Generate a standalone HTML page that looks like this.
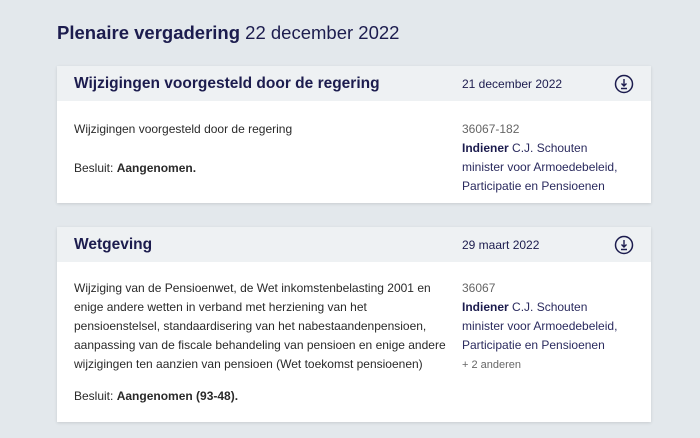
<!DOCTYPE html><html><head><meta charset="utf-8"><style>
body{margin:0;width:700px;height:438px;background:#e3e8ec;font-family:"Liberation Sans",sans-serif;overflow:hidden;position:relative}
h1{position:absolute;left:57px;top:22px;margin:0;font-size:18.5px;font-weight:normal;color:#1c1c4e}
h1 b{font-weight:bold}
.card{position:absolute;left:57px;width:594px;background:#fff;box-shadow:0 1px 3px rgba(0,0,0,.12)}
.hd{height:35px;background:#eef1f3;position:relative}
.hd .t{position:absolute;left:17px;top:9px;font-size:15.5px;font-weight:bold;color:#1c1c4e}
.hd .d{position:absolute;left:405px;top:11px;font-size:12px;color:#1c1c4e}
.hd svg{position:absolute;left:557px;top:8px}
.l{position:absolute;left:17px;font-size:12px;line-height:19px;color:#2a2a2a}
.r{position:absolute;left:405px;font-size:12px;line-height:19px;color:#2a2a5e}
.r b{color:#1c1c4e}
.g{color:#666}
</style></head><body>
<h1><b>Plenaire vergadering</b> 22 december 2022</h1>
<div class="card" style="top:66px;height:137px">
<div class="hd"><div class="t">Wijzigingen voorgesteld door de regering</div><div class="d">21 december 2022</div>
<svg width="20" height="20" viewBox="0 0 20 20"><circle cx="10" cy="10" r="8.5" fill="none" stroke="#1c1c4e" stroke-width="1.5"/><path d="M10 5v7M7.5 9.5 10 12l2.5-2.5M7 14.5h6" fill="none" stroke="#1c1c4e" stroke-width="1.4"/></svg></div>
<div class="l" style="top:54px">Wijzigingen voorgesteld door de regering</div>
<div class="l" style="top:93px">Besluit: <b>Aangenomen.</b></div>
<div class="r" style="top:54px"><span class="g">36067-182</span><br><b>Indiener</b> C.J. Schouten<br>minister voor Armoedebeleid,<br>Participatie en Pensioenen</div>
</div>
<div class="card" style="top:227px;height:195px">
<div class="hd"><div class="t">Wetgeving</div><div class="d">29 maart 2022</div>
<svg width="20" height="20" viewBox="0 0 20 20"><circle cx="10" cy="10" r="8.5" fill="none" stroke="#1c1c4e" stroke-width="1.5"/><path d="M10 5v7M7.5 9.5 10 12l2.5-2.5M7 14.5h6" fill="none" stroke="#1c1c4e" stroke-width="1.4"/></svg></div>
<div class="l" style="top:52px">Wijziging van de Pensioenwet, de Wet inkomstenbelasting 2001 en<br>enige andere wetten in verband met herziening van het<br>pensioenstelsel, standaardisering van het nabestaandenpensioen,<br>aanpassing van de fiscale behandeling van pensioen en enige andere<br>wijzigingen ten aanzien van pensioen (Wet toekomst pensioenen)</div>
<div class="l" style="top:160px">Besluit: <b>Aangenomen (93-48).</b></div>
<div class="r" style="top:52px"><span class="g">36067</span><br><b>Indiener</b> C.J. Schouten<br>minister voor Armoedebeleid,<br>Participatie en Pensioenen<br><span class="g" style="font-size:11px">+ 2 anderen</span></div>
</div>
</body></html>
